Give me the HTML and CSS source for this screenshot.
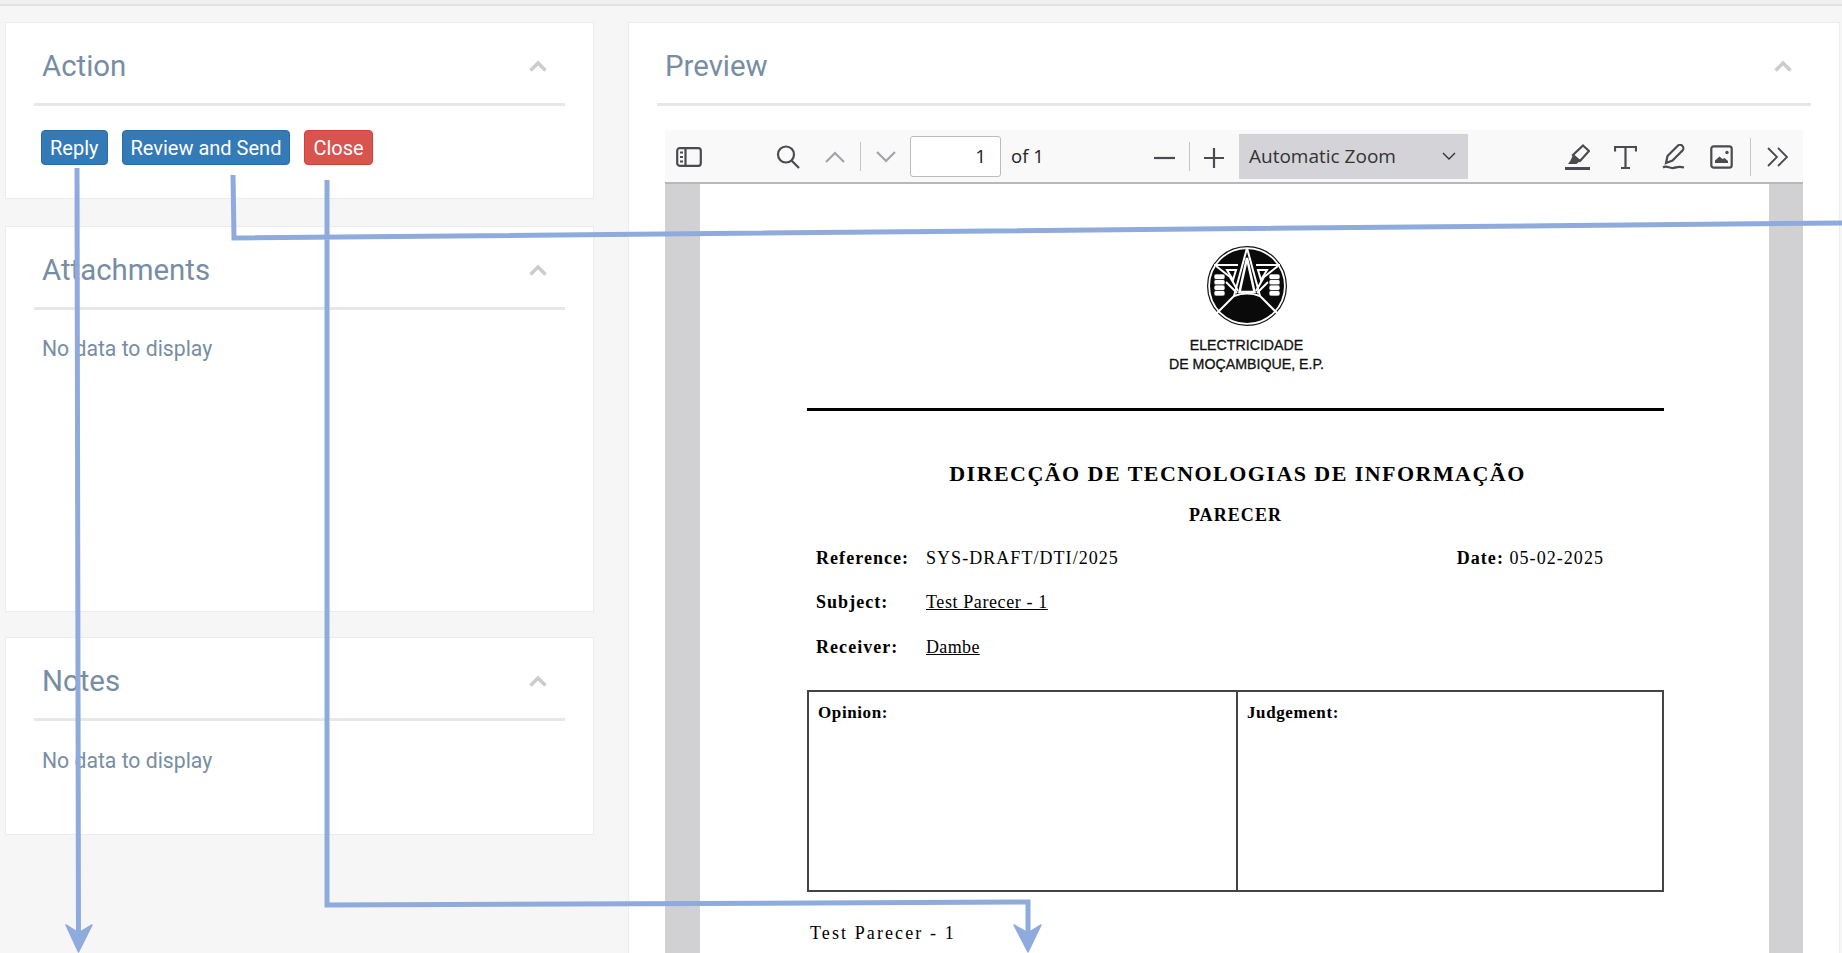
FILE: index.html
```html
<!DOCTYPE html>
<html lang="en">
<head>
<meta charset="utf-8">
<title>Preview</title>
<link rel="stylesheet" href="styles.css">
</head>
<body>
<div class="topstrip"></div>
<main class="layout">
  <div class="side">
    <section class="card card-action">
      <header class="card-head"><h2>Action</h2><svg class="collapse" viewBox="0 0 18 12"><path d="M1.5 10.5 9 3l7.5 7.5"/></svg></header>
      <div class="btns">
        <button class="btn blue">Reply</button>
        <button class="btn blue">Review and Send</button>
        <button class="btn red">Close</button>
      </div>
    </section>
    <section class="card card-attach">
      <header class="card-head"><h2>Attachments</h2><svg class="collapse" viewBox="0 0 18 12"><path d="M1.5 10.5 9 3l7.5 7.5"/></svg></header>
      <p class="empty">No data to display</p>
    </section>
    <section class="card card-notes">
      <header class="card-head"><h2>Notes</h2><svg class="collapse" viewBox="0 0 18 12"><path d="M1.5 10.5 9 3l7.5 7.5"/></svg></header>
      <p class="empty">No data to display</p>
    </section>
  </div>
  <section class="card card-preview">
    <header class="card-head head-preview"><h2>Preview</h2><svg class="collapse" viewBox="0 0 18 12"><path d="M1.5 10.5 9 3l7.5 7.5"/></svg></header>
    <div class="viewer">
      <div class="toolbar">
        <svg class="ic ic-side" viewBox="0 0 26 20"><rect x="1.200" y="1.200" width="23.600" height="17.600" rx="2.500"/><path d="M9.500 1v18"/><path class="thin" d="M4 5.500h3M4 10h3M4 14.500h3"/></svg>
        <svg class="ic ic-search" viewBox="0 0 24 24"><circle cx="10" cy="9.500" r="8"/><path d="m15.500 15.500 7.500 7.500"/></svg>
        <svg class="ic ic-up" viewBox="0 0 20 12"><path d="M1 11 10 2l9 9"/></svg>
        <span class="tsep sep-a"></span>
        <svg class="ic ic-down" viewBox="0 0 20 12"><path d="M1 1l9 9 9-9"/></svg>
        <span class="pagebox">1</span>
        <span class="of">of 1</span>
        <svg class="ic ic-minus" viewBox="0 0 21 20"><path d="M0 10h21"/></svg>
        <span class="tsep sep-b"></span>
        <svg class="ic ic-plus" viewBox="0 0 20 20"><path d="M0 10h20M10 0v20"/></svg>
        <div class="zoomsel"><span>Automatic Zoom</span><svg class="caret" viewBox="0 0 14 8"><path d="m1 1 6 6 6-6"/></svg></div>
        <svg class="ic ic-high" viewBox="0 0 25 26"><path class="thick" d="M0 24.500h25"/><path d="M18 1.500 24 7l-9 10-7-6z"/><path class="solid" d="M8 11l7 6-3.500 3H4l-1 0 2.500-3.500z"/></svg>
        <svg class="ic ic-t" viewBox="0 0 23 24"><path d="M1 6.500V2h21v4.500M11.500 2v21M7 23h9"/></svg>
        <svg class="ic ic-pen" viewBox="0 0 23 26"><path d="M4 19 5.500 12 15.500 2a2.500 2.500 0 0 1 5 4.500L10.500 16.500z"/><path d="M1 23.500c4-2.500 6 1 10 .5s5-2 11-.5"/></svg>
        <svg class="ic ic-img" viewBox="0 0 23 24"><rect x="1.300" y="1.300" width="20.400" height="21.400" rx="2.500"/><path class="solid" d="M5 18v-2.500l4.500-4 3 2.500 2-1 3.500 3v2z"/><circle class="solid" cx="17" cy="7.500" r="1.700"/></svg>
        <span class="tsep sep-c"></span>
        <svg class="ic ic-more" viewBox="0 0 21 20"><path d="m1 1 9 9-9 9M11 1l9 9-9 9"/></svg>
      </div>
      <div class="docarea">
        <article class="page">
          <div class="logo-wrap">
            <svg class="logo" viewBox="0 0 80 80">
              <circle cx="40" cy="40" r="39.400" fill="#fff" stroke="#111" stroke-width="1.200"/>
              <circle cx="40" cy="40" r="37" fill="#0a0a0a"/>
              <g fill="none" stroke="#fff" stroke-width="2">
                <path d="M40 2 27 50 9 68M40 2l13 48 18 18"/>
                <path d="M27 50q13-5 26 0"/>
                <path d="M7 19h24M73 19H49M9 20l14 11 8 14M71 20 57 31l-8 14"/>
                <path d="M20 24h9l-3 10zM60 24H51l3 10z"/>
                <path d="M40 12 32.500 46h15z" fill="#0a0a0a" stroke-width="2.500"/>
                <path d="M19 36l11 11M61 36 50 47"/>
              </g>
              <g fill="#fff" stroke="#111" stroke-width=".7">
                <rect x="7" y="28" width="11" height="5.500" rx="2"/><rect x="7" y="33.500" width="11" height="5.500" rx="2"/><rect x="7" y="39" width="11" height="5.500" rx="2"/><rect x="7" y="44.500" width="11" height="5.500" rx="2"/>
                <rect x="62" y="28" width="11" height="5.500" rx="2"/><rect x="62" y="33.500" width="11" height="5.500" rx="2"/><rect x="62" y="39" width="11" height="5.500" rx="2"/><rect x="62" y="44.500" width="11" height="5.500" rx="2"/>
              </g>
            </svg>
            <div class="logo-text">ELECTRICIDADE<br>DE MOÇAMBIQUE, E.P.</div>
          </div>
          <hr class="rule">
          <h1 class="doc-title">DIRECÇÃO DE TECNOLOGIAS DE INFORMAÇÃO</h1>
          <h3 class="doc-sub">PARECER</h3>
          <div class="row row-ref"><b class="lbl">Reference:</b><span class="val">SYS-DRAFT/DTI/2025</span><span class="date"><b>Date:</b> 05-02-2025</span></div>
          <div class="row row-sub"><b class="lbl">Subject:</b><u class="val">Test Parecer - 1</u></div>
          <div class="row row-rec"><b class="lbl">Receiver:</b><u class="val">Dambe</u></div>
          <div class="doc-table">
            <div class="cell"><b>Opinion:</b></div>
            <div class="cell"><b>Judgement:</b></div>
          </div>
          <p class="doc-body">Test Parecer - 1</p>
        </article>
      </div>
    </div>
  </section>
</main>
<svg class="annot" viewBox="0 0 1842 953">
  <path d="M77 168 78.500 945M233 175 234 238 1842 223M327 180V905L1028 902V945"/>
  <path class="head" d="M78.500 952 66 925 78.500 933 92 925zM1028 952 1014 925 1028 933 1041 925z"/>
</svg>
</body>
</html>
```
FILE: styles.css
```css
* { box-sizing: border-box; }
html, body { margin: 0; height: 953px; overflow: hidden; }
body { background: #f6f6f6; font-family: Roboto, sans-serif; color: #778899; position: relative; }
.topstrip { height: 6px; background: #f0f0f0; border-bottom: 2px solid #e2e2e2; }
.layout { display: flex; gap: 34px; padding: 16px 2px 0 5px; }
.side { width: 589px; flex: none; display: flex; flex-direction: column; }
.card { background: #fff; border: 1px solid #ececec; padding: 0 28px; }
.card-action { height: 177px; margin-bottom: 27px; }
.card-attach { height: 386px; margin-bottom: 25px; }
.card-notes { height: 198px; }
.card-preview { flex: 1; height: 940px; padding: 0 28px; }
.card-head { height: 83px; border-bottom: 3px solid #e7e7e7; display: flex; align-items: center; justify-content: space-between; padding: 6px 8px 0 8px; }
.card-head h2 { margin: 0; font-weight: 400; font-size: 29.400px; color: #778da3; }
.collapse { width: 18px; height: 12px; margin-right: 10px; fill: none; stroke: #ccc; stroke-width: 3.500; }
.btns { display: flex; gap: 14px; margin: 24px 0 0 7px; }
.btn { height: 35px; padding: 0 8px; border: 1px solid transparent; border-radius: 4px; color: #fff; font: 400 20px Roboto, sans-serif; white-space: nowrap; }
.blue { background: #337ab7; border-color: #2e6da4; }
.red { background: #d9534f; border-color: #d43f3a; }
.empty { margin: 27px 0 0 8px; font-size: 21.200px; line-height: 24px; color: #778da3; }
.card-notes .empty { margin-top: 28px; }

.head-preview { padding-left: 8px; }
.head-preview .collapse { margin-right: 11px; }
.viewer { margin: 24px 8px 0 8px; }
.toolbar { height: 54px; background: #f9f9fa; border-bottom: 2px solid #b8b8bb; position: relative; }
.ic { position: absolute; fill: none; stroke: #4a4a4f; stroke-width: 2.200; }
.ic-side { left: 11px; top: 17px; width: 26px; height: 20px; }
.ic-search { left: 111px; top: 15px; width: 24px; height: 24px; }
.ic-up { left: 160px; top: 21px; width: 20px; height: 12px; stroke: #a4a4a8; }
.ic-down { left: 211px; top: 21px; width: 20px; height: 12px; stroke: #a4a4a8; }
.ic-minus { left: 489px; top: 18px; width: 21px; height: 20px; }
.ic-plus { left: 539px; top: 18px; width: 20px; height: 20px; }
.ic-high { left: 900px; top: 14px; width: 25px; height: 26px; }
.ic-t { left: 949px; top: 15px; width: 23px; height: 24px; }
.ic-pen { left: 997px; top: 14px; width: 23px; height: 26px; }
.ic-img { left: 1045px; top: 15px; width: 23px; height: 24px; }
.ic-more { left: 1102px; top: 17px; width: 21px; height: 20px; stroke-width: 1.800; }
.ic .thick { stroke-width: 3; }
.ic .thin { stroke-width: 1.800; }
.ic .solid { fill: #4a4a4f; stroke: none; }
.tsep { position: absolute; width: 1px; background: #c4c4c7; }
.sep-a { left: 195px; top: 12px; height: 29px; }
.sep-b { left: 524px; top: 12px; height: 29px; }
.sep-c { left: 1085px; top: 8px; height: 38px; }
.pagebox { position: absolute; left: 245px; top: 6px; width: 91px; height: 41px; background: #fff; border: 1px solid #bbb; border-radius: 3px; font: 400 19px/39px "Open Sans", sans-serif; color: #222; text-align: right; padding-right: 14px; }
.of { position: absolute; left: 346px; top: 13px; font: 400 18.500px/26px "Open Sans", sans-serif; color: #222; }
.zoomsel { position: absolute; left: 574px; top: 4px; width: 229px; height: 45px; background: #d4d4d8; display: flex; align-items: center; justify-content: space-between; padding: 0 12px 2px 10px; font: 400 19px "Open Sans", sans-serif; color: #333; }
.caret { width: 14px; height: 8px; fill: none; stroke: #333; stroke-width: 1.400; }

.docarea { height: 771px; background: #d1d1d4; padding: 0 34px 0 35px; overflow: hidden; }
.page { height: 771px; background: #fff; padding: 62px 105px 0 107px; font-family: "Liberation Serif", serif; color: #000; }
.logo-wrap { display: flex; flex-direction: column; align-items: center; padding-left: 22px; }
.logo { width: 80px; height: 80px; display: block; }
.logo-text { margin-top: 10px; font: 400 14.200px/18.500px "Liberation Sans", sans-serif; text-align: center; color: #111; -webkit-text-stroke: .3px #111; }
.rule { height: 3px; border: 0; background: #000; margin: 35px 0 0; }
.doc-title { margin: 51px 0 0; padding-left: 4px; text-align: center; font-size: 22px; line-height: 24px; letter-spacing: 1.450px; font-weight: 700; }
.doc-sub { margin: 19px 0 0; text-align: center; font-size: 18px; line-height: 20px; letter-spacing: 1.080px; font-weight: 700; }
.row { display: flex; font-size: 18px; line-height: 20px; letter-spacing: 1.050px; padding-left: 9px; }
.row-ref { margin-top: 23px; }
.row-sub { margin-top: 24px; }
.row-rec { margin-top: 25px; }
.row-sub .val { letter-spacing: .6px; }
.row-rec .val { letter-spacing: .35px; }
.lbl { width: 110px; flex: none; }
.date { margin-left: auto; padding-right: 60px; }
.doc-table { display: grid; grid-template-columns: 427px 1fr; height: 202px; margin-top: 33px; border: 2px solid #444; font-size: 17px; letter-spacing: .6px; }
.cell { padding: 11px 9px; line-height: 20px; }
.cell + .cell { border-left: 2px solid #444; }
.doc-body { margin: 31px 0 0 3px; font-size: 18px; line-height: 20px; letter-spacing: 2.100px; }

.annot { position: absolute; left: 0; top: 0; width: 1842px; height: 953px; pointer-events: none; fill: none; stroke: #8faadc; stroke-width: 5; }
.annot .head { fill: #8faadc; stroke: #8faadc; stroke-width: 1.500; stroke-linejoin: round; }
```
